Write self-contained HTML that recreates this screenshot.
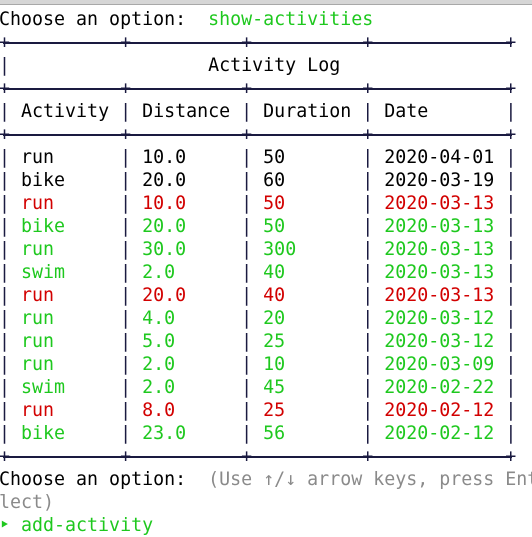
<!DOCTYPE html>
<html><head><meta charset="utf-8"><style>
html,body{margin:0;padding:0;background:#fff;width:532px;height:531px;overflow:hidden}
.bar{position:absolute;left:0;top:0;width:532px;height:4px;background:#d6d6d6;border-bottom:1px solid #a8a8a8}
pre{position:absolute;left:-1px;top:8px;width:533px;overflow:hidden;margin:0;font-family:"DejaVu Sans Mono","Liberation Mono",monospace;font-size:18.3px;letter-spacing:0px;line-height:23px;color:#000;white-space:pre}
.t{color:#1a1a40}
.h{color:#1a1a40;display:inline-block;background:linear-gradient(#1a1a40,#1a1a40) no-repeat;background-size:calc(100% - 8px) 2px;background-position:4px 11px}
.r{color:#d20000}
.g{color:#1ec81e}
.y{color:#8a8a8a}
</style></head><body>
<div class="bar"></div>
<pre>Choose an option:  <span class="g">show-activities</span>
<span class="h">+----------+----------+----------+------------+</span>
<span class="t">|</span>                  Activity Log                 <span class="t">|</span>
<span class="h">+----------+----------+----------+------------+</span>
<span class="t">|</span> Activity <span class="t">|</span> Distance <span class="t">|</span> Duration <span class="t">|</span> Date       <span class="t">|</span>
<span class="h">+----------+----------+----------+------------+</span>
<span class="t">|</span> run      <span class="t">|</span> 10.0     <span class="t">|</span> 50       <span class="t">|</span> 2020-04-01 <span class="t">|</span>
<span class="t">|</span> bike     <span class="t">|</span> 20.0     <span class="t">|</span> 60       <span class="t">|</span> 2020-03-19 <span class="t">|</span>
<span class="t">|</span><span class="r"> run      </span><span class="t">|</span><span class="r"> 10.0     </span><span class="t">|</span><span class="r"> 50       </span><span class="t">|</span><span class="r"> 2020-03-13 </span><span class="t">|</span>
<span class="t">|</span><span class="g"> bike     </span><span class="t">|</span><span class="g"> 20.0     </span><span class="t">|</span><span class="g"> 50       </span><span class="t">|</span><span class="g"> 2020-03-13 </span><span class="t">|</span>
<span class="t">|</span><span class="g"> run      </span><span class="t">|</span><span class="g"> 30.0     </span><span class="t">|</span><span class="g"> 300      </span><span class="t">|</span><span class="g"> 2020-03-13 </span><span class="t">|</span>
<span class="t">|</span><span class="g"> swim     </span><span class="t">|</span><span class="g"> 2.0      </span><span class="t">|</span><span class="g"> 40       </span><span class="t">|</span><span class="g"> 2020-03-13 </span><span class="t">|</span>
<span class="t">|</span><span class="r"> run      </span><span class="t">|</span><span class="r"> 20.0     </span><span class="t">|</span><span class="r"> 40       </span><span class="t">|</span><span class="r"> 2020-03-13 </span><span class="t">|</span>
<span class="t">|</span><span class="g"> run      </span><span class="t">|</span><span class="g"> 4.0      </span><span class="t">|</span><span class="g"> 20       </span><span class="t">|</span><span class="g"> 2020-03-12 </span><span class="t">|</span>
<span class="t">|</span><span class="g"> run      </span><span class="t">|</span><span class="g"> 5.0      </span><span class="t">|</span><span class="g"> 25       </span><span class="t">|</span><span class="g"> 2020-03-12 </span><span class="t">|</span>
<span class="t">|</span><span class="g"> run      </span><span class="t">|</span><span class="g"> 2.0      </span><span class="t">|</span><span class="g"> 10       </span><span class="t">|</span><span class="g"> 2020-03-09 </span><span class="t">|</span>
<span class="t">|</span><span class="g"> swim     </span><span class="t">|</span><span class="g"> 2.0      </span><span class="t">|</span><span class="g"> 45       </span><span class="t">|</span><span class="g"> 2020-02-22 </span><span class="t">|</span>
<span class="t">|</span><span class="r"> run      </span><span class="t">|</span><span class="r"> 8.0      </span><span class="t">|</span><span class="r"> 25       </span><span class="t">|</span><span class="r"> 2020-02-12 </span><span class="t">|</span>
<span class="t">|</span><span class="g"> bike     </span><span class="t">|</span><span class="g"> 23.0     </span><span class="t">|</span><span class="g"> 56       </span><span class="t">|</span><span class="g"> 2020-02-12 </span><span class="t">|</span>
<span class="h">+----------+----------+----------+------------+</span>
Choose an option:  <span class="y">(Use ↑/↓ arrow keys, press Ent</span>
<span class="y">lect)</span>
<span class="g">‣ add-activity</span></pre>
</body></html>
